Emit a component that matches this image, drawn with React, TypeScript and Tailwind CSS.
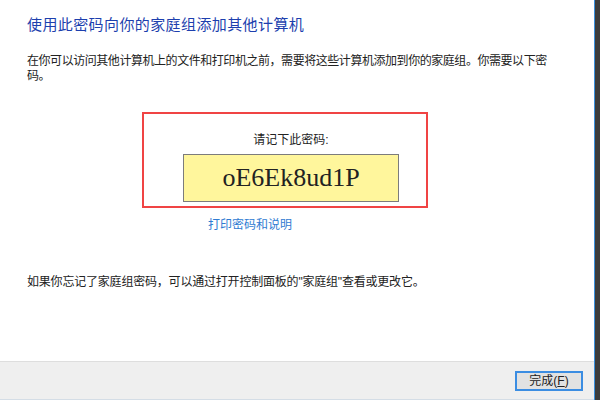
import React from "react";

const cjk = "font-['Liberation_Sans','Noto_Sans_CJK_SC',sans-serif]";

const PasswordDialog: React.FC = () => {
  return (
    <div className={`flex h-[400px] w-[600px] ${cjk}`}>
      <div className="flex w-[594px] flex-col">
        {/* content */}
        <div className="flex-1 bg-white pl-[27px] pt-[15px]">
          <h1 className="text-[15px] leading-[20px] tracking-[0.4px] text-[#1d3fae]">
            使用此密码向你的家庭组添加其他计算机
          </h1>
          <p className="mt-[19px] w-[526px] text-[12px] leading-[15px] tracking-[-0.45px] text-[#222]">
            在你可以访问其他计算机上的文件和打印机之前，需要将这些计算机添加到你的家庭组。你需要以下密码。
          </p>

          <div className="ml-[115px] mt-[28px] h-[96px] w-[286px] border-2 border-[#f04444] pl-[12px] pt-[18px]">
            <div className="flex flex-col items-center">
              <span className="text-[12px] leading-[16px] text-[#222]">请记下此密码:</span>
              <div className="mt-[6px] flex h-[48px] w-[216px] items-center justify-center border border-[#7c7c7c] bg-[#fff69c]">
                <span className="font-['Liberation_Serif',serif] text-[26px] leading-none text-[#222]">
                  oE6Ek8ud1P
                </span>
              </div>
            </div>
          </div>

          <a className="ml-[181px] mt-[9px] block w-fit text-[12px] leading-[16px] text-[#2f7bd2]">
            打印密码和说明
          </a>

          <p className="mt-[41px] text-[12px] leading-[16px] tracking-[-0.2px] text-[#222]">
            如果你忘记了家庭组密码，可以通过打开控制面板的"家庭组"查看或更改它。
          </p>
        </div>

        {/* footer */}
        <div className="flex h-[39px] items-start justify-end border-t border-b border-t-[#dedede] border-b-[#d4dde6] bg-[#efefef] pr-[11px] pt-[9px]">
          <button className="flex h-[20px] w-[68px] items-center justify-center border-2 border-[#3b8de2] bg-[#e2e2e2] text-[12px] leading-none text-[#222]">
            完成(<span className="underline">F</span>)
          </button>
        </div>
      </div>
      <div className="w-px bg-[#3b8fdc]" />
      <div className="flex-1 bg-[#3c3c3c]" />
    </div>
  );
};

export default function App() {
  return <PasswordDialog />;
}
